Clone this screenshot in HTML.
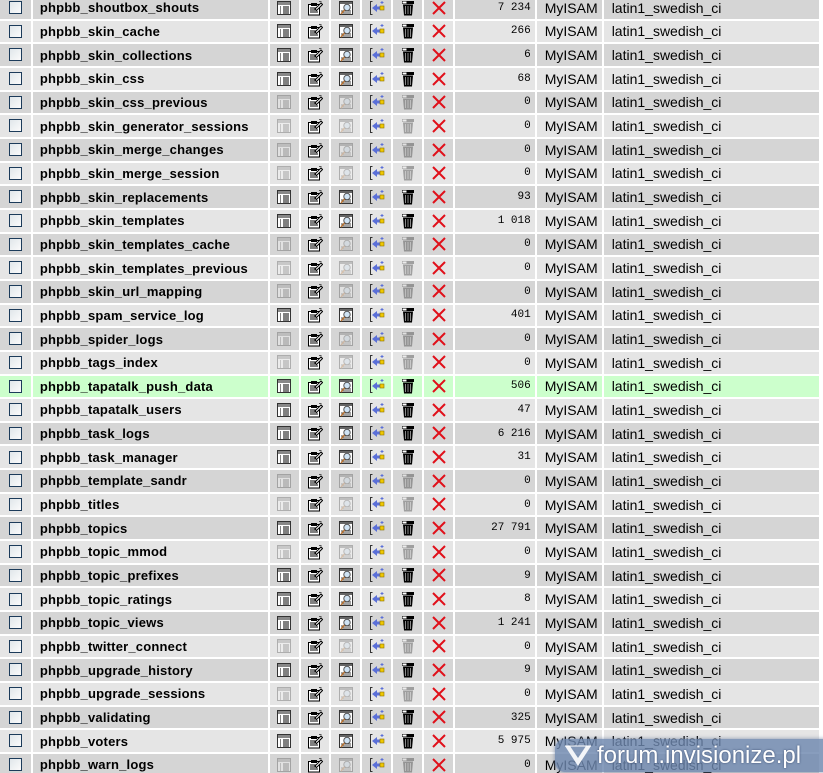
<!DOCTYPE html>
<html><head><meta charset="utf-8">
<style>
html,body{margin:0;padding:0;background:#fff;width:823px;height:773px;overflow:hidden;position:relative}
table{position:absolute;left:-2px;top:-5px;border-collapse:separate;border-spacing:2px;table-layout:fixed}
td{height:21.66px;padding:0;font-family:"Liberation Sans",Arial,sans-serif;white-space:nowrap;overflow:hidden}
tr.d td{background:#d5d5d5}
tr.l td{background:#e5e5e5}
tr.g td{background:#ccffcc}
td.c{text-align:center}
td.c i{display:inline-block;width:11px;height:11px;border:1px solid #1c3b5a;background:linear-gradient(135deg,#e0e6ea,#fbfbfb);vertical-align:middle}
td.n{font-weight:bold;font-size:13px;color:#000;padding-left:7px;letter-spacing:0.2px}
td.i{text-align:center}
td.i svg{width:16px;height:16px;vertical-align:middle}
td.r{text-align:right;font-family:"Liberation Mono",monospace;font-size:11px;padding-right:4px}
td.e{font-size:14px;color:#000;padding-left:8px}
td.o{font-size:14px;color:#000;padding-left:8px}
.x svg.dis{opacity:.3}
#wm{position:absolute;left:555px;top:739px;width:280px;height:33px;background:rgba(110,135,175,.82);border-radius:10px 0 0 10px;box-shadow:0 0 4px rgba(90,110,150,.7)}
#wm span{position:absolute;left:42px;top:0px;font-family:"Liberation Sans",sans-serif;font-size:24px;color:#fff;line-height:33px;text-shadow:0 0 2px #3a4c70}
#wm svg{position:absolute;left:8px;top:4px}
</style></head><body>
<svg width="0" height="0" style="position:absolute">
<defs>
<symbol id="b" viewBox="0 0 16 16"><rect x="1.5" y="1.5" width="13" height="13" fill="#fff" stroke="#333"/><rect x="2" y="2" width="12" height="3" fill="#888"/><path d="M4 7h1M4 9h1M4 11h1M4 13h1M7 7h6M7 9h6M7 11h6M7 13h6" stroke="#000"/></symbol>
<symbol id="s" viewBox="0 0 16 16"><rect x="1.5" y="4.5" width="11" height="10.5" fill="#fff" stroke="#000"/><rect x="4" y="3" width="6" height="3" fill="#000"/><path d="M3 8h8M3 10h6M3 12h8" stroke="#000"/><path d="M8 9l6-6 1.5 1.5-6 6z" fill="#fff" stroke="#000"/><path d="M12 1.5l2.5 0" stroke="#555"/></symbol>
<symbol id="q" viewBox="0 0 16 16"><rect x="1.5" y="1.5" width="13" height="13" fill="#fff" stroke="#333"/><rect x="2" y="2" width="12" height="2" fill="#666"/><path d="M3 11h10M3 13h10" stroke="#444"/><circle cx="9" cy="7.5" r="3.2" fill="#cfe3f4" stroke="#555"/><path d="M6.5 10l-3.5 4" stroke="#b87333" stroke-width="1.5"/></symbol>
<symbol id="n" viewBox="0 0 16 16"><path d="M3.5 1.5h-2v13h2" fill="none" stroke="#333"/><path d="M3 8l5-4v2.5h4v3h-4V12z" fill="#5a6fd8"/><rect x="11" y="6" width="4" height="4" fill="#f0c800" stroke="#8a7000" stroke-width=".6"/><path d="M13 1v3M11.5 2.5h3" stroke="#5a6fd8"/></symbol>
<symbol id="t" viewBox="0 0 16 16"><rect x="2" y="1" width="12" height="3" fill="#000"/><rect x="2.5" y="1.5" width="4" height="2" fill="#fff"/><path d="M3 4.5h10l-1 11h-8z" fill="#000"/><path d="M5.5 6v8M8 6v8M10.5 6v8" stroke="#888"/></symbol>
<symbol id="x" viewBox="0 0 16 16"><path d="M2 2l12 12M14 2L2 14" stroke="#e0101a" stroke-width="2"/></symbol>
</defs></svg>
<table>
<colgroup><col style="width:31px"><col style="width:235px"><col style="width:29px"><col style="width:29px"><col style="width:29px"><col style="width:29px"><col style="width:29px"><col style="width:29px"><col style="width:80px"><col style="width:65px"><col style="width:216px"></colgroup>
<tr class="d"><td class="c"><i></i></td><td class="n">phpbb_shoutbox_shouts</td><td class="i"><svg><use href="#b"/></svg></td><td class="i"><svg><use href="#s"/></svg></td><td class="i"><svg><use href="#q"/></svg></td><td class="i"><svg><use href="#n"/></svg></td><td class="i"><svg><use href="#t"/></svg></td><td class="i"><svg><use href="#x"/></svg></td><td class="r">7 234</td><td class="e">MyISAM</td><td class="o">latin1_swedish_ci</td></tr>
<tr class="l"><td class="c"><i></i></td><td class="n">phpbb_skin_cache</td><td class="i"><svg><use href="#b"/></svg></td><td class="i"><svg><use href="#s"/></svg></td><td class="i"><svg><use href="#q"/></svg></td><td class="i"><svg><use href="#n"/></svg></td><td class="i"><svg><use href="#t"/></svg></td><td class="i"><svg><use href="#x"/></svg></td><td class="r">266</td><td class="e">MyISAM</td><td class="o">latin1_swedish_ci</td></tr>
<tr class="d"><td class="c"><i></i></td><td class="n">phpbb_skin_collections</td><td class="i"><svg><use href="#b"/></svg></td><td class="i"><svg><use href="#s"/></svg></td><td class="i"><svg><use href="#q"/></svg></td><td class="i"><svg><use href="#n"/></svg></td><td class="i"><svg><use href="#t"/></svg></td><td class="i"><svg><use href="#x"/></svg></td><td class="r">6</td><td class="e">MyISAM</td><td class="o">latin1_swedish_ci</td></tr>
<tr class="l"><td class="c"><i></i></td><td class="n">phpbb_skin_css</td><td class="i"><svg><use href="#b"/></svg></td><td class="i"><svg><use href="#s"/></svg></td><td class="i"><svg><use href="#q"/></svg></td><td class="i"><svg><use href="#n"/></svg></td><td class="i"><svg><use href="#t"/></svg></td><td class="i"><svg><use href="#x"/></svg></td><td class="r">68</td><td class="e">MyISAM</td><td class="o">latin1_swedish_ci</td></tr>
<tr class="d x"><td class="c"><i></i></td><td class="n">phpbb_skin_css_previous</td><td class="i"><svg class="dis"><use href="#b"/></svg></td><td class="i"><svg><use href="#s"/></svg></td><td class="i"><svg class="dis"><use href="#q"/></svg></td><td class="i"><svg><use href="#n"/></svg></td><td class="i"><svg class="dis"><use href="#t"/></svg></td><td class="i"><svg><use href="#x"/></svg></td><td class="r">0</td><td class="e">MyISAM</td><td class="o">latin1_swedish_ci</td></tr>
<tr class="l x"><td class="c"><i></i></td><td class="n">phpbb_skin_generator_sessions</td><td class="i"><svg class="dis"><use href="#b"/></svg></td><td class="i"><svg><use href="#s"/></svg></td><td class="i"><svg class="dis"><use href="#q"/></svg></td><td class="i"><svg><use href="#n"/></svg></td><td class="i"><svg class="dis"><use href="#t"/></svg></td><td class="i"><svg><use href="#x"/></svg></td><td class="r">0</td><td class="e">MyISAM</td><td class="o">latin1_swedish_ci</td></tr>
<tr class="d x"><td class="c"><i></i></td><td class="n">phpbb_skin_merge_changes</td><td class="i"><svg class="dis"><use href="#b"/></svg></td><td class="i"><svg><use href="#s"/></svg></td><td class="i"><svg class="dis"><use href="#q"/></svg></td><td class="i"><svg><use href="#n"/></svg></td><td class="i"><svg class="dis"><use href="#t"/></svg></td><td class="i"><svg><use href="#x"/></svg></td><td class="r">0</td><td class="e">MyISAM</td><td class="o">latin1_swedish_ci</td></tr>
<tr class="l x"><td class="c"><i></i></td><td class="n">phpbb_skin_merge_session</td><td class="i"><svg class="dis"><use href="#b"/></svg></td><td class="i"><svg><use href="#s"/></svg></td><td class="i"><svg class="dis"><use href="#q"/></svg></td><td class="i"><svg><use href="#n"/></svg></td><td class="i"><svg class="dis"><use href="#t"/></svg></td><td class="i"><svg><use href="#x"/></svg></td><td class="r">0</td><td class="e">MyISAM</td><td class="o">latin1_swedish_ci</td></tr>
<tr class="d"><td class="c"><i></i></td><td class="n">phpbb_skin_replacements</td><td class="i"><svg><use href="#b"/></svg></td><td class="i"><svg><use href="#s"/></svg></td><td class="i"><svg><use href="#q"/></svg></td><td class="i"><svg><use href="#n"/></svg></td><td class="i"><svg><use href="#t"/></svg></td><td class="i"><svg><use href="#x"/></svg></td><td class="r">93</td><td class="e">MyISAM</td><td class="o">latin1_swedish_ci</td></tr>
<tr class="l"><td class="c"><i></i></td><td class="n">phpbb_skin_templates</td><td class="i"><svg><use href="#b"/></svg></td><td class="i"><svg><use href="#s"/></svg></td><td class="i"><svg><use href="#q"/></svg></td><td class="i"><svg><use href="#n"/></svg></td><td class="i"><svg><use href="#t"/></svg></td><td class="i"><svg><use href="#x"/></svg></td><td class="r">1 018</td><td class="e">MyISAM</td><td class="o">latin1_swedish_ci</td></tr>
<tr class="d x"><td class="c"><i></i></td><td class="n">phpbb_skin_templates_cache</td><td class="i"><svg class="dis"><use href="#b"/></svg></td><td class="i"><svg><use href="#s"/></svg></td><td class="i"><svg class="dis"><use href="#q"/></svg></td><td class="i"><svg><use href="#n"/></svg></td><td class="i"><svg class="dis"><use href="#t"/></svg></td><td class="i"><svg><use href="#x"/></svg></td><td class="r">0</td><td class="e">MyISAM</td><td class="o">latin1_swedish_ci</td></tr>
<tr class="l x"><td class="c"><i></i></td><td class="n">phpbb_skin_templates_previous</td><td class="i"><svg class="dis"><use href="#b"/></svg></td><td class="i"><svg><use href="#s"/></svg></td><td class="i"><svg class="dis"><use href="#q"/></svg></td><td class="i"><svg><use href="#n"/></svg></td><td class="i"><svg class="dis"><use href="#t"/></svg></td><td class="i"><svg><use href="#x"/></svg></td><td class="r">0</td><td class="e">MyISAM</td><td class="o">latin1_swedish_ci</td></tr>
<tr class="d x"><td class="c"><i></i></td><td class="n">phpbb_skin_url_mapping</td><td class="i"><svg class="dis"><use href="#b"/></svg></td><td class="i"><svg><use href="#s"/></svg></td><td class="i"><svg class="dis"><use href="#q"/></svg></td><td class="i"><svg><use href="#n"/></svg></td><td class="i"><svg class="dis"><use href="#t"/></svg></td><td class="i"><svg><use href="#x"/></svg></td><td class="r">0</td><td class="e">MyISAM</td><td class="o">latin1_swedish_ci</td></tr>
<tr class="l"><td class="c"><i></i></td><td class="n">phpbb_spam_service_log</td><td class="i"><svg><use href="#b"/></svg></td><td class="i"><svg><use href="#s"/></svg></td><td class="i"><svg><use href="#q"/></svg></td><td class="i"><svg><use href="#n"/></svg></td><td class="i"><svg><use href="#t"/></svg></td><td class="i"><svg><use href="#x"/></svg></td><td class="r">401</td><td class="e">MyISAM</td><td class="o">latin1_swedish_ci</td></tr>
<tr class="d x"><td class="c"><i></i></td><td class="n">phpbb_spider_logs</td><td class="i"><svg class="dis"><use href="#b"/></svg></td><td class="i"><svg><use href="#s"/></svg></td><td class="i"><svg class="dis"><use href="#q"/></svg></td><td class="i"><svg><use href="#n"/></svg></td><td class="i"><svg class="dis"><use href="#t"/></svg></td><td class="i"><svg><use href="#x"/></svg></td><td class="r">0</td><td class="e">MyISAM</td><td class="o">latin1_swedish_ci</td></tr>
<tr class="l x"><td class="c"><i></i></td><td class="n">phpbb_tags_index</td><td class="i"><svg class="dis"><use href="#b"/></svg></td><td class="i"><svg><use href="#s"/></svg></td><td class="i"><svg class="dis"><use href="#q"/></svg></td><td class="i"><svg><use href="#n"/></svg></td><td class="i"><svg class="dis"><use href="#t"/></svg></td><td class="i"><svg><use href="#x"/></svg></td><td class="r">0</td><td class="e">MyISAM</td><td class="o">latin1_swedish_ci</td></tr>
<tr class="g"><td class="c"><i></i></td><td class="n">phpbb_tapatalk_push_data</td><td class="i"><svg><use href="#b"/></svg></td><td class="i"><svg><use href="#s"/></svg></td><td class="i"><svg><use href="#q"/></svg></td><td class="i"><svg><use href="#n"/></svg></td><td class="i"><svg><use href="#t"/></svg></td><td class="i"><svg><use href="#x"/></svg></td><td class="r">506</td><td class="e">MyISAM</td><td class="o">latin1_swedish_ci</td></tr>
<tr class="l"><td class="c"><i></i></td><td class="n">phpbb_tapatalk_users</td><td class="i"><svg><use href="#b"/></svg></td><td class="i"><svg><use href="#s"/></svg></td><td class="i"><svg><use href="#q"/></svg></td><td class="i"><svg><use href="#n"/></svg></td><td class="i"><svg><use href="#t"/></svg></td><td class="i"><svg><use href="#x"/></svg></td><td class="r">47</td><td class="e">MyISAM</td><td class="o">latin1_swedish_ci</td></tr>
<tr class="d"><td class="c"><i></i></td><td class="n">phpbb_task_logs</td><td class="i"><svg><use href="#b"/></svg></td><td class="i"><svg><use href="#s"/></svg></td><td class="i"><svg><use href="#q"/></svg></td><td class="i"><svg><use href="#n"/></svg></td><td class="i"><svg><use href="#t"/></svg></td><td class="i"><svg><use href="#x"/></svg></td><td class="r">6 216</td><td class="e">MyISAM</td><td class="o">latin1_swedish_ci</td></tr>
<tr class="l"><td class="c"><i></i></td><td class="n">phpbb_task_manager</td><td class="i"><svg><use href="#b"/></svg></td><td class="i"><svg><use href="#s"/></svg></td><td class="i"><svg><use href="#q"/></svg></td><td class="i"><svg><use href="#n"/></svg></td><td class="i"><svg><use href="#t"/></svg></td><td class="i"><svg><use href="#x"/></svg></td><td class="r">31</td><td class="e">MyISAM</td><td class="o">latin1_swedish_ci</td></tr>
<tr class="d x"><td class="c"><i></i></td><td class="n">phpbb_template_sandr</td><td class="i"><svg class="dis"><use href="#b"/></svg></td><td class="i"><svg><use href="#s"/></svg></td><td class="i"><svg class="dis"><use href="#q"/></svg></td><td class="i"><svg><use href="#n"/></svg></td><td class="i"><svg class="dis"><use href="#t"/></svg></td><td class="i"><svg><use href="#x"/></svg></td><td class="r">0</td><td class="e">MyISAM</td><td class="o">latin1_swedish_ci</td></tr>
<tr class="l x"><td class="c"><i></i></td><td class="n">phpbb_titles</td><td class="i"><svg class="dis"><use href="#b"/></svg></td><td class="i"><svg><use href="#s"/></svg></td><td class="i"><svg class="dis"><use href="#q"/></svg></td><td class="i"><svg><use href="#n"/></svg></td><td class="i"><svg class="dis"><use href="#t"/></svg></td><td class="i"><svg><use href="#x"/></svg></td><td class="r">0</td><td class="e">MyISAM</td><td class="o">latin1_swedish_ci</td></tr>
<tr class="d"><td class="c"><i></i></td><td class="n">phpbb_topics</td><td class="i"><svg><use href="#b"/></svg></td><td class="i"><svg><use href="#s"/></svg></td><td class="i"><svg><use href="#q"/></svg></td><td class="i"><svg><use href="#n"/></svg></td><td class="i"><svg><use href="#t"/></svg></td><td class="i"><svg><use href="#x"/></svg></td><td class="r">27 791</td><td class="e">MyISAM</td><td class="o">latin1_swedish_ci</td></tr>
<tr class="l x"><td class="c"><i></i></td><td class="n">phpbb_topic_mmod</td><td class="i"><svg class="dis"><use href="#b"/></svg></td><td class="i"><svg><use href="#s"/></svg></td><td class="i"><svg class="dis"><use href="#q"/></svg></td><td class="i"><svg><use href="#n"/></svg></td><td class="i"><svg class="dis"><use href="#t"/></svg></td><td class="i"><svg><use href="#x"/></svg></td><td class="r">0</td><td class="e">MyISAM</td><td class="o">latin1_swedish_ci</td></tr>
<tr class="d"><td class="c"><i></i></td><td class="n">phpbb_topic_prefixes</td><td class="i"><svg><use href="#b"/></svg></td><td class="i"><svg><use href="#s"/></svg></td><td class="i"><svg><use href="#q"/></svg></td><td class="i"><svg><use href="#n"/></svg></td><td class="i"><svg><use href="#t"/></svg></td><td class="i"><svg><use href="#x"/></svg></td><td class="r">9</td><td class="e">MyISAM</td><td class="o">latin1_swedish_ci</td></tr>
<tr class="l"><td class="c"><i></i></td><td class="n">phpbb_topic_ratings</td><td class="i"><svg><use href="#b"/></svg></td><td class="i"><svg><use href="#s"/></svg></td><td class="i"><svg><use href="#q"/></svg></td><td class="i"><svg><use href="#n"/></svg></td><td class="i"><svg><use href="#t"/></svg></td><td class="i"><svg><use href="#x"/></svg></td><td class="r">8</td><td class="e">MyISAM</td><td class="o">latin1_swedish_ci</td></tr>
<tr class="d"><td class="c"><i></i></td><td class="n">phpbb_topic_views</td><td class="i"><svg><use href="#b"/></svg></td><td class="i"><svg><use href="#s"/></svg></td><td class="i"><svg><use href="#q"/></svg></td><td class="i"><svg><use href="#n"/></svg></td><td class="i"><svg><use href="#t"/></svg></td><td class="i"><svg><use href="#x"/></svg></td><td class="r">1 241</td><td class="e">MyISAM</td><td class="o">latin1_swedish_ci</td></tr>
<tr class="l x"><td class="c"><i></i></td><td class="n">phpbb_twitter_connect</td><td class="i"><svg class="dis"><use href="#b"/></svg></td><td class="i"><svg><use href="#s"/></svg></td><td class="i"><svg class="dis"><use href="#q"/></svg></td><td class="i"><svg><use href="#n"/></svg></td><td class="i"><svg class="dis"><use href="#t"/></svg></td><td class="i"><svg><use href="#x"/></svg></td><td class="r">0</td><td class="e">MyISAM</td><td class="o">latin1_swedish_ci</td></tr>
<tr class="d"><td class="c"><i></i></td><td class="n">phpbb_upgrade_history</td><td class="i"><svg><use href="#b"/></svg></td><td class="i"><svg><use href="#s"/></svg></td><td class="i"><svg><use href="#q"/></svg></td><td class="i"><svg><use href="#n"/></svg></td><td class="i"><svg><use href="#t"/></svg></td><td class="i"><svg><use href="#x"/></svg></td><td class="r">9</td><td class="e">MyISAM</td><td class="o">latin1_swedish_ci</td></tr>
<tr class="l x"><td class="c"><i></i></td><td class="n">phpbb_upgrade_sessions</td><td class="i"><svg class="dis"><use href="#b"/></svg></td><td class="i"><svg><use href="#s"/></svg></td><td class="i"><svg class="dis"><use href="#q"/></svg></td><td class="i"><svg><use href="#n"/></svg></td><td class="i"><svg class="dis"><use href="#t"/></svg></td><td class="i"><svg><use href="#x"/></svg></td><td class="r">0</td><td class="e">MyISAM</td><td class="o">latin1_swedish_ci</td></tr>
<tr class="d"><td class="c"><i></i></td><td class="n">phpbb_validating</td><td class="i"><svg><use href="#b"/></svg></td><td class="i"><svg><use href="#s"/></svg></td><td class="i"><svg><use href="#q"/></svg></td><td class="i"><svg><use href="#n"/></svg></td><td class="i"><svg><use href="#t"/></svg></td><td class="i"><svg><use href="#x"/></svg></td><td class="r">325</td><td class="e">MyISAM</td><td class="o">latin1_swedish_ci</td></tr>
<tr class="l"><td class="c"><i></i></td><td class="n">phpbb_voters</td><td class="i"><svg><use href="#b"/></svg></td><td class="i"><svg><use href="#s"/></svg></td><td class="i"><svg><use href="#q"/></svg></td><td class="i"><svg><use href="#n"/></svg></td><td class="i"><svg><use href="#t"/></svg></td><td class="i"><svg><use href="#x"/></svg></td><td class="r">5 975</td><td class="e">MyISAM</td><td class="o">latin1_swedish_ci</td></tr>
<tr class="d x"><td class="c"><i></i></td><td class="n">phpbb_warn_logs</td><td class="i"><svg class="dis"><use href="#b"/></svg></td><td class="i"><svg><use href="#s"/></svg></td><td class="i"><svg class="dis"><use href="#q"/></svg></td><td class="i"><svg><use href="#n"/></svg></td><td class="i"><svg class="dis"><use href="#t"/></svg></td><td class="i"><svg><use href="#x"/></svg></td><td class="r">0</td><td class="e">MyISAM</td><td class="o">latin1_swedish_ci</td></tr>
</table>
<div id="wm"><svg width="30" height="26" viewBox="0 0 30 26"><path d="M2 3l13 20L28 3l-5 0-8 12L7 3z" fill="#fff" opacity=".9"/><path d="M2 3h26" stroke="#fff" stroke-width="1"/></svg><span>forum.invisionize.pl</span></div>
</body></html>
